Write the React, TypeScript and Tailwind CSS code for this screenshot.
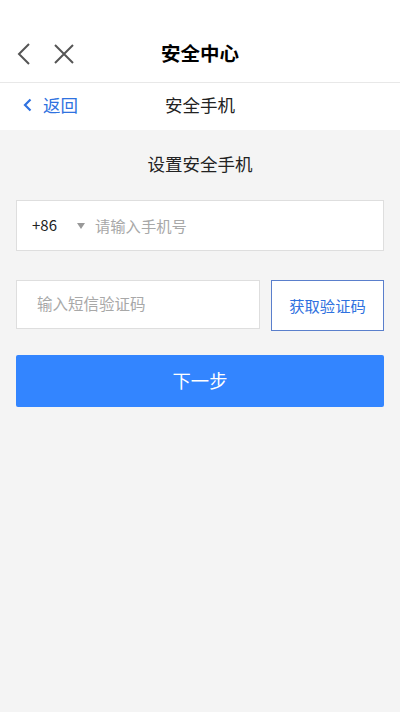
export default function App() {
  const font = { fontFamily: '"Noto Sans CJK SC", "Noto Sans", sans-serif' };
  return (
    <div className="min-h-[712px] w-[400px] bg-[#f4f4f4] text-[#222]" style={font}>
      {/* Top bar */}
      <div className="relative flex h-[82px] items-end bg-white pb-[16px]">
        <div className="flex items-center gap-[22px] pl-[17px]">
          <svg width="14" height="24" viewBox="0 0 14 24" fill="none" stroke="#555" strokeWidth="2">
            <path d="M12 2 L2 12 L12 22" />
          </svg>
          <svg width="22" height="22" viewBox="0 0 22 22" fill="none" stroke="#555" strokeWidth="2">
            <path d="M2 2 L20 20 M20 2 L2 20" />
          </svg>
        </div>
        <div className="absolute inset-x-0 bottom-[15px] text-center text-[19.5px] font-bold leading-[28px] text-black">
          安全中心
        </div>
      </div>
      <div className="h-px bg-[#e8e8e8]" />

      {/* Sub header */}
      <div className="relative flex h-[47px] items-center bg-white pb-[3px]">
        <div className="flex items-center gap-[11px] pl-[23px] text-[17.5px] text-[#2f72e0]">
          <svg width="9" height="14" viewBox="0 0 9 14" fill="none" stroke="#2f72e0" strokeWidth="2.2">
            <path d="M7.5 1.5 L2 7 L7.5 12.5" />
          </svg>
          <span>返回</span>
        </div>
        <div className="absolute inset-x-0 text-center text-[17.5px] text-[#222]">安全手机</div>
      </div>

      {/* Content */}
      <div className="px-4 pt-[21px]">
        <div className="text-center text-[17.5px] leading-[26px] text-[#222]">设置安全手机</div>

        <div className="mt-[23px] flex h-[51px] items-center border border-[#dedede] bg-white pl-[15px] text-[15px]">
          <span className="text-[#222]">+86</span>
          <svg className="ml-[20px]" width="8" height="6" viewBox="0 0 8 6" fill="#999">
            <path d="M0 0 L8 0 L4 6 Z" />
          </svg>
          <span className="ml-[10px] text-[15.3px] text-[#a8a8a8]">请输入手机号</span>
        </div>

        <div className="mt-[29px] flex gap-[11px]">
          <div className="flex h-[49px] flex-1 items-center border border-[#dedede] bg-white pb-[2px] pl-[20px] text-[15.5px] text-[#a8a8a8]">
            输入短信验证码
          </div>
          <button className="h-[51px] w-[113px] border border-[#5a7fcc] bg-white text-[15.3px] text-[#2f72e0]">
            获取验证码
          </button>
        </div>

        <button className="mt-[24px] h-[52px] w-full rounded-[2px] bg-[#3385ff] text-[18.3px] text-white">
          下一步
        </button>
      </div>
    </div>
  );
}
